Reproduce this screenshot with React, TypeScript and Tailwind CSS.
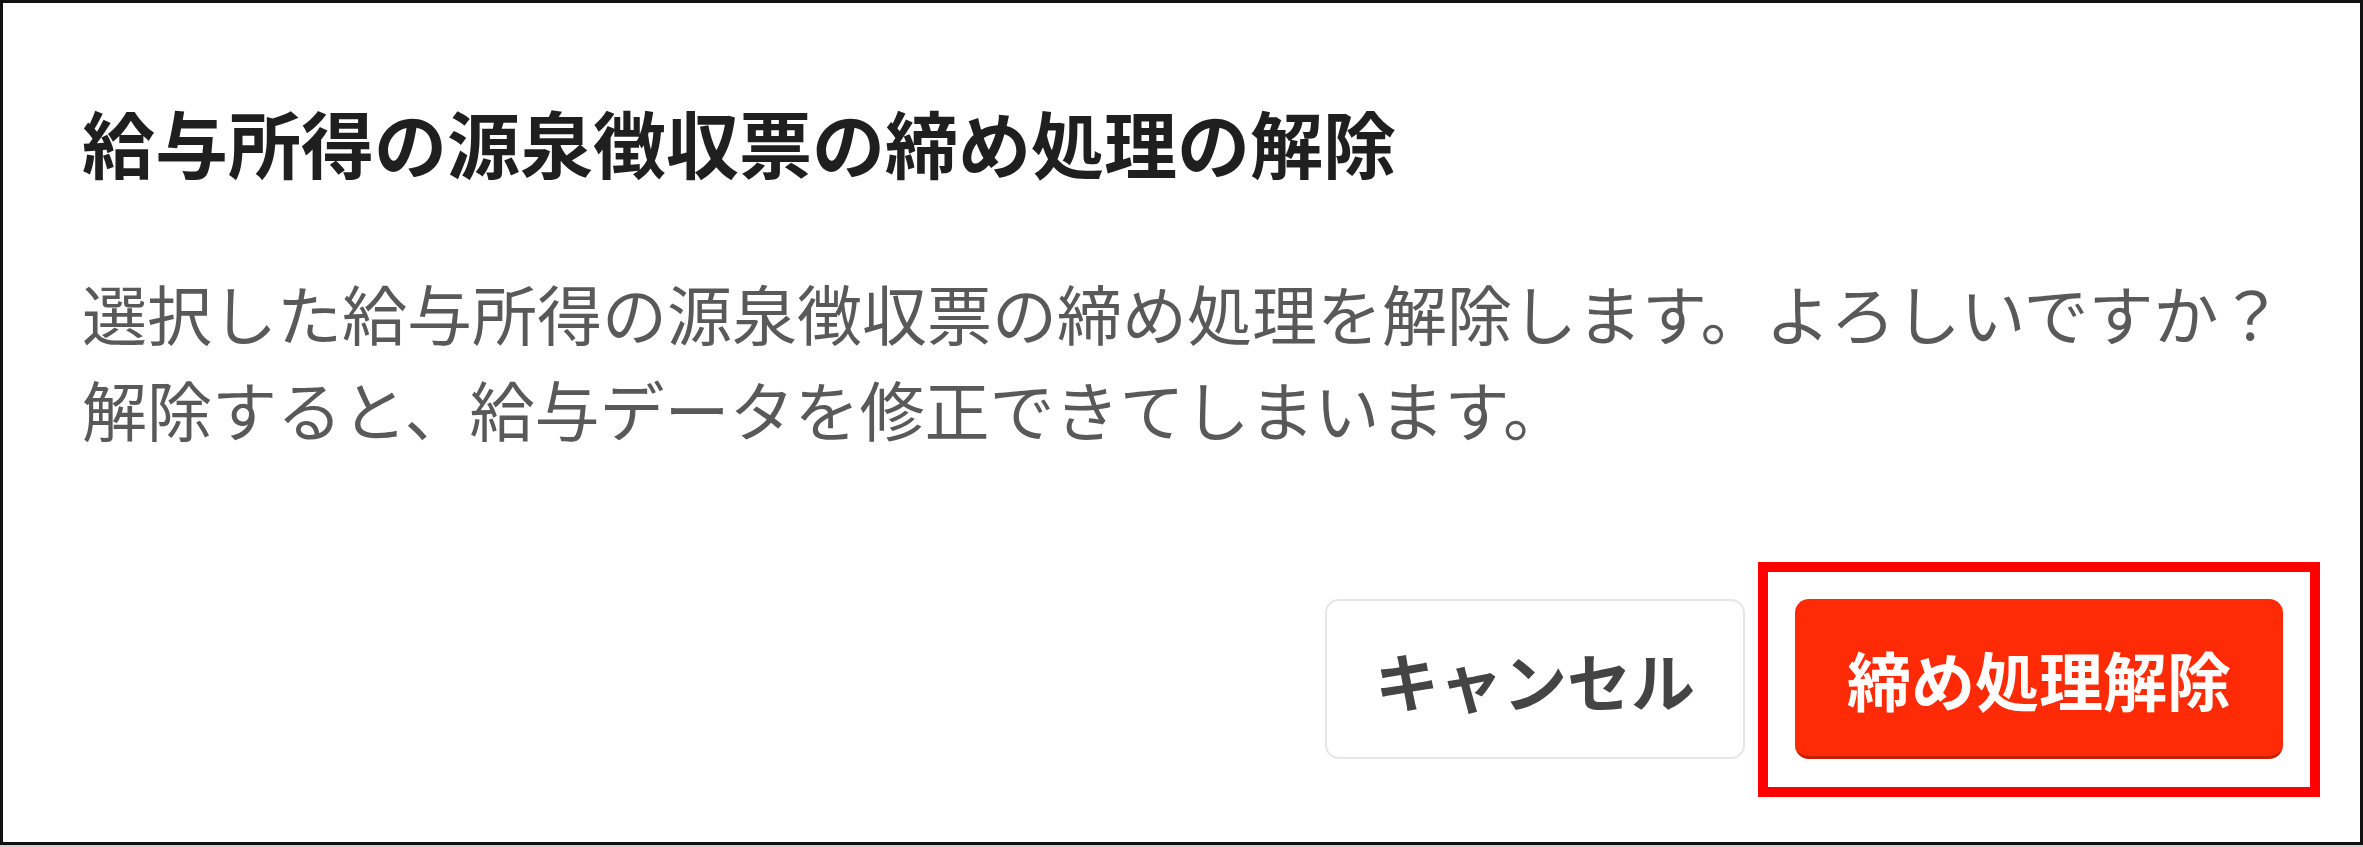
import React from "react";

const font = { fontFamily: '"Noto Sans CJK JP", "Noto Sans", sans-serif' };

export default function App() {
  return (
    <div className="w-[2363px] bg-white" style={font}>
      <div className="box-border flex h-[845px] w-[2363px] flex-col border-[3px] border-[#111111] bg-white pl-[79px] pr-[77px] pt-[81px] pb-[83px]">
        <h1 className="m-0 whitespace-nowrap text-[73px] font-bold leading-[115px] text-[#1f1f1f]">
          給与所得の源泉徴収票の締め処理の解除
        </h1>
        <p className="mt-[65px] whitespace-nowrap text-[65px] leading-[96px] text-[#595959]">
          選択した給与所得の源泉徴収票の締め処理を解除します。よろしいですか？
          <br />
          解除すると、給与データを修正できてしまいます。
        </p>
        <div className="mt-auto flex items-center justify-end gap-[50px]">
          <button className="box-border flex h-[160px] w-[420px] items-center justify-center rounded-[14px] border-2 border-[#e6e6e6] bg-white text-[64px] font-bold text-[#444444]">
            キャンセル
          </button>
          <div className="relative">
            <button className="box-border flex h-[160px] w-[488px] items-center justify-center rounded-[14px] border-b-[3px] border-[#c81e00] bg-[#ff2a06] text-[64px] font-bold text-white">
              締め処理解除
            </button>
            <span className="pointer-events-none absolute -bottom-[38px] -left-[37px] -right-[37px] -top-[37px] border-[10px] border-[#ff0000]" />
          </div>
        </div>
      </div>
      <div className="h-[2px] w-[2363px] bg-[#cfcfcf]" />
    </div>
  );
}
